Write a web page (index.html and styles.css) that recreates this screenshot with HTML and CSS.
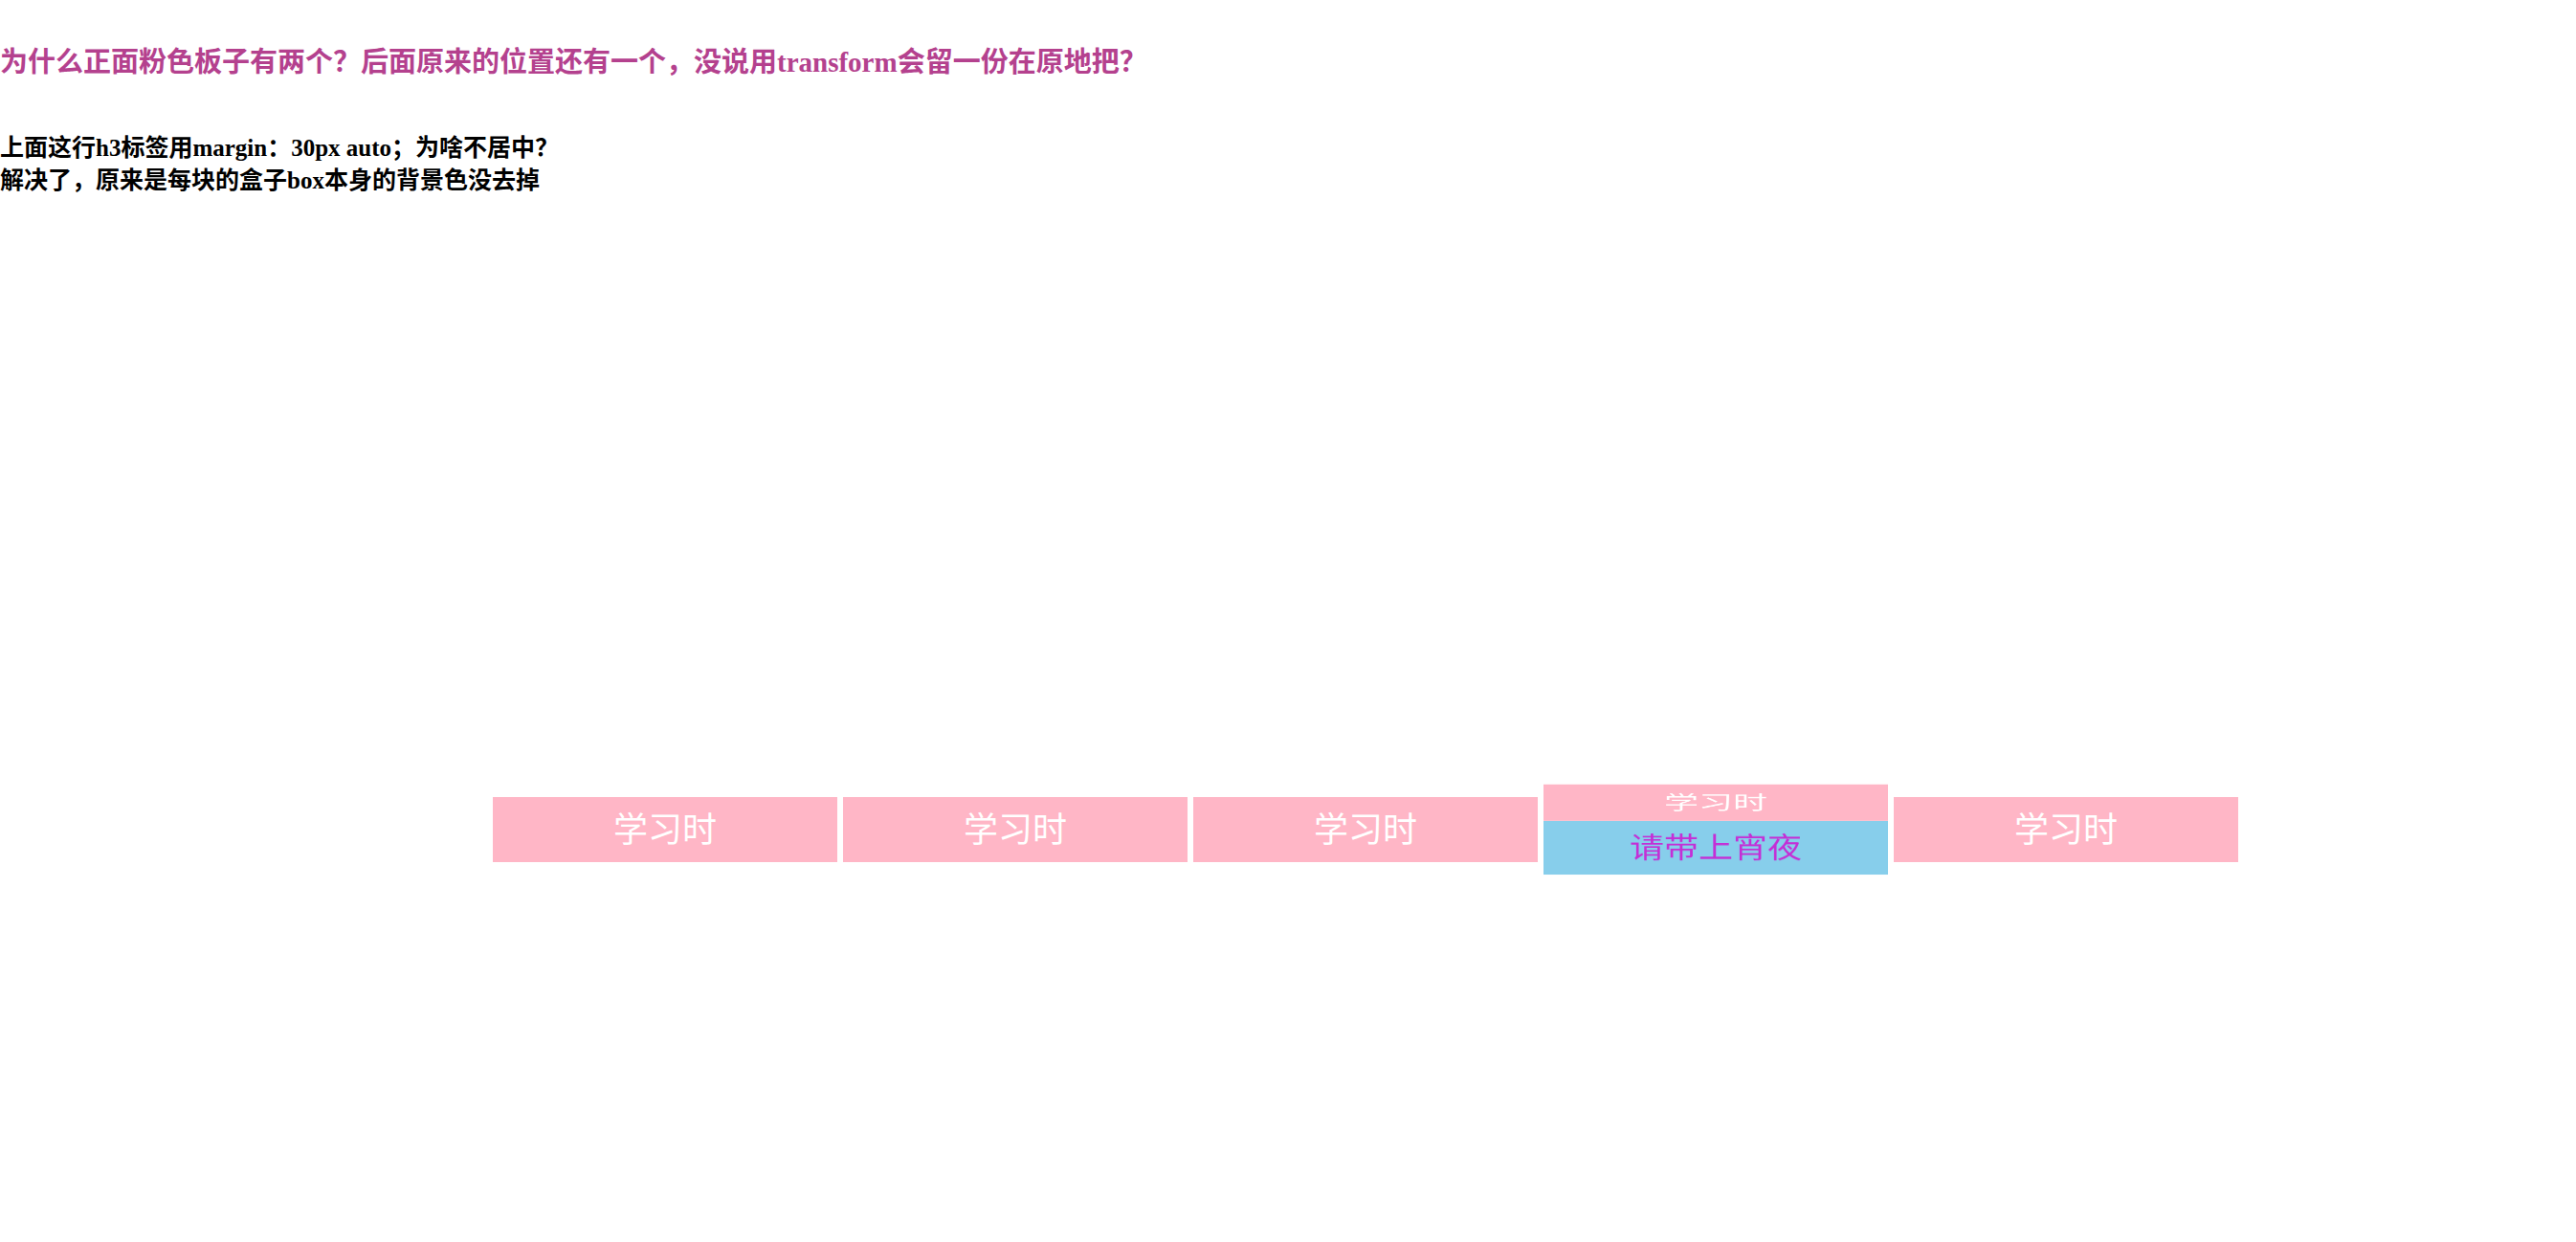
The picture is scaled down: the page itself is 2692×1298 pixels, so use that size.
FILE: index.html
```html
<!DOCTYPE html>
<html lang="zh-CN">
<head>
<meta charset="utf-8">
<title>3D 导航栏</title>
<link rel="stylesheet" href="styles.css">
</head>
<body>
<header class="notes">
  <h3 class="question">为什么正面粉色板子有两个？后面原来的位置还有一个，没说用transform会留一份在原地把？</h3>
  <h4 class="answer">上面这行h3标签用margin：30px auto；为啥不居中？<br>解决了，原来是每块的盒子box本身的背景色没去掉</h4>
</header>
<ul class="nav">
  <li class="box"><div class="front">学习时</div></li>
  <li class="box"><div class="front">学习时</div></li>
  <li class="box"><div class="front">学习时</div></li>
  <li class="box turning"><div class="front">学习时</div><div class="bottom">请带上宵夜</div></li>
  <li class="box"><div class="front">学习时</div></li>
</ul>
</body>
</html>
```
FILE: styles.css
```css
* {
  margin: 0;
  padding: 0;
  box-sizing: border-box;
}

body {
  display: flow-root;
  min-height: 100vh;
  font-family: "Liberation Serif", "Noto Sans CJK SC", serif;
}

.question {
  margin-top: 46px;
  font-size: 29px;
  line-height: 38px;
  color: #b4418e;
}

.answer {
  margin-top: 54px;
  font-size: 25px;
  line-height: 34px;
  color: #000;
}

.nav {
  display: flex;
  justify-content: center;
  gap: 6px;
  margin-top: 607px;
  padding: 20px 0 20px 162px;
  list-style: none;
}

/* each item is a bar with a front face and, when it turns, a bottom face */
.box {
  display: grid;
  width: 360px;
  height: 68px;
  font-size: 36px;
  line-height: 70px;
  text-align: center;
  transform-style: preserve-3d;
}

.front,
.bottom {
  grid-area: 1 / 1;
  height: 68px;
}

.front {
  background: #ffb6c6;
  color: #fff;
  transform: translateZ(34px);
}

.bottom {
  background: #87ceeb;
  color: #c42fd6;
  transform: rotateX(-90deg) translateZ(34px);
}

.turning {
  transform: rotateX(56deg);
}
```
